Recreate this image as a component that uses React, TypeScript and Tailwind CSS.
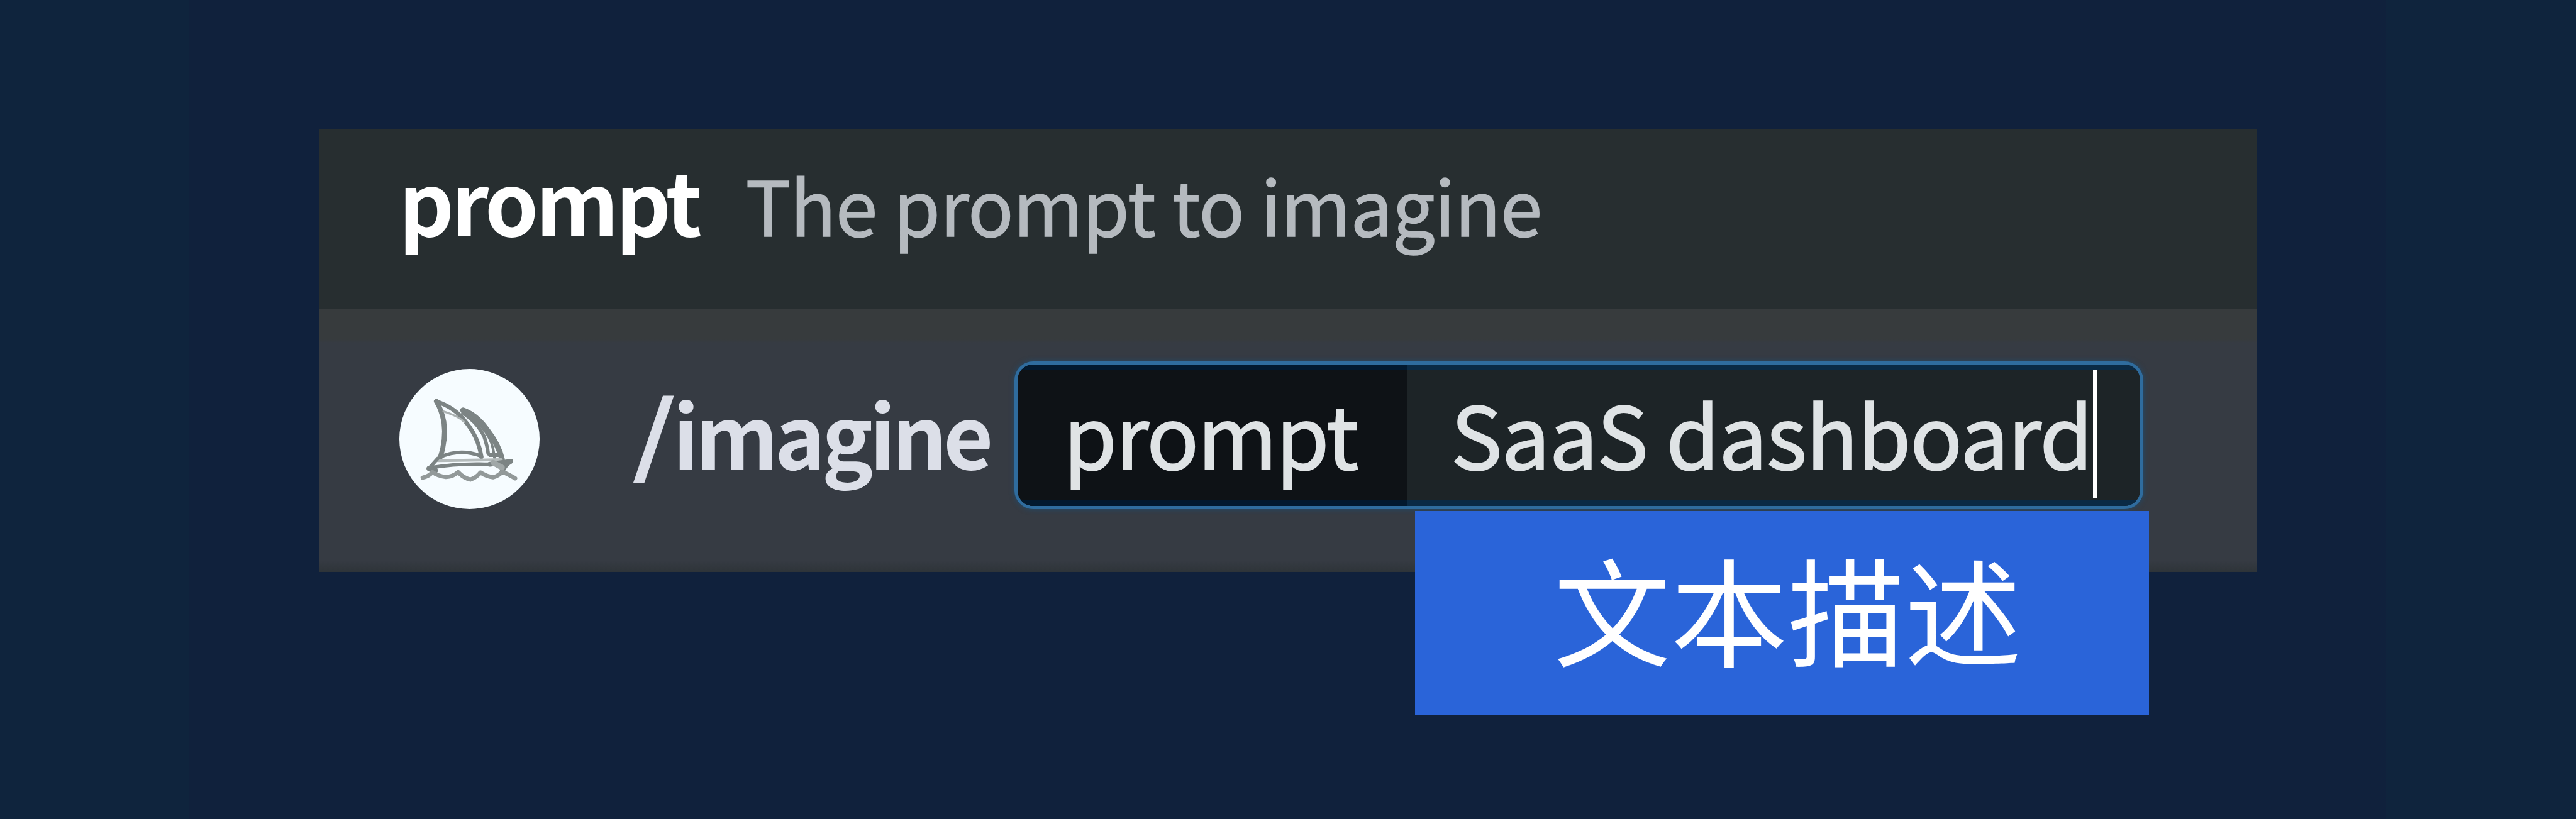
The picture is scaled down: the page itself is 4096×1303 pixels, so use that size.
function SailboatAvatar() {
  return (
    <div className="mt-[11px] size-[223px] shrink-0 overflow-hidden rounded-full bg-[#f6fcff]">
      <svg
        viewBox="115 105 860 860"
        className="size-full"
        fill="none"
        stroke="#7c8484"
        strokeWidth="22"
        strokeLinecap="round"
        strokeLinejoin="round"
      >
        {/* front sail */}
        <path d="M342 304 Q372 350 388 430 Q402 540 366 648" strokeWidth="30" />
        <path d="M342 304 Q450 340 512 418 Q600 520 618 645" strokeWidth="26" />
        <path d="M366 645 Q490 590 618 640" />
        <path d="M385 365 Q480 395 512 430" stroke="#aab1b1" strokeWidth="12" />
        {/* back sail */}
        <path d="M505 358 Q585 385 650 475 Q725 570 745 660" strokeWidth="34" />
        <path d="M505 375 Q600 440 635 520 Q655 580 660 625" strokeWidth="22" />
        <path d="M570 410 Q650 480 680 560 Q695 610 698 650" strokeWidth="16" />
        <path d="M672 632 L738 632" strokeWidth="26" />
        {/* hull */}
        <path d="M350 668 L740 662" stroke="#b4bbbb" strokeWidth="18" />
        <path d="M350 655 L300 712 Q480 682 670 690" />
        <path d="M670 690 L798 672 Q762 690 742 742" strokeWidth="30" />
        <path d="M690 680 L745 710" stroke="#a0a7a7" strokeWidth="34" />
        <path d="M298 716 L335 728" strokeWidth="34" />
        {/* waves */}
        <path
          d="M258 772 Q295 765 318 738 Q350 762 400 768 Q445 765 475 738 Q510 775 550 784 Q590 770 612 740 Q650 765 690 770 Q725 762 745 735 Q780 750 825 776"
          stroke="#929999"
          strokeWidth="26"
        />
      </svg>
    </div>
  );
}

function PromptField() {
  return (
    <div className="flex h-[235px] w-[1795px] overflow-hidden rounded-[30px] border-[5px] border-[#2f6c9e] bg-[#1d2427] text-[137px] leading-none text-[#dfe3e5] shadow-[0_0_8px_#1f4c70] [-webkit-text-stroke:2px_#dfe3e5]">
      <div className="flex w-[620px] items-center border-y-[9px] border-[#02192f] bg-[#0e1216] pl-[73px]">
        <span className="mb-[10px] tracking-[-2.2px]">prompt</span>
      </div>
      <div className="flex flex-1 items-center border-y-[9px] border-[#0a2a45] pl-[69px]">
        <span className="mb-[10px] w-[1021px] whitespace-nowrap tracking-[-1.2px]">
          SaaS dashboard
        </span>
        <span className="mb-[4px] h-[205px] w-[6px] bg-white"></span>
      </div>
    </div>
  );
}

function App() {
  return (
    <div className="h-[1303px] w-[4096px] overflow-hidden bg-[linear-gradient(to_right,#0f243d_301px,#10213c_301px,#10213c_3794px,#0f243d_3794px)] pt-[205px] pl-[508px] font-['Noto_Sans_CJK_SC',sans-serif]">
      <div className="relative h-[705px] w-[3080px] bg-[linear-gradient(#373b3d_335px,#363b43_340px,#363b43_686px,#2e3439)]">
        <header className="flex h-[287px] items-baseline bg-[#272e30] pt-[43px] pl-[126px]">
          <span className="text-[137px] leading-none font-bold tracking-[-4.8px] text-white">
            prompt
          </span>
          <span className="ml-[74px] text-[120px] leading-none tracking-[-0.7px] text-[#b5babf] [-webkit-text-stroke:1.5px_#b5babf]">
            The prompt to imagine
          </span>
        </header>
        <div className="flex items-center pt-[83px] pl-[127px]">
          <SailboatAvatar />
          <div className="mb-[10px] ml-[157px] w-[598px] text-[137px] leading-none font-bold whitespace-nowrap text-[#dcdfe8]">
            <span className="inline-block -translate-y-[5px] -skew-x-5 [-webkit-text-stroke:4px_#dcdfe8]">
              /
            </span>
            <span className="ml-[2px] tracking-[-6px]">imagine</span>
          </div>
          <PromptField />
        </div>
        <div className="absolute top-[608px] left-[1742px] flex h-[324px] w-[1167px] items-center justify-center bg-[#2a64d9] pb-[18px] pl-[18px]">
          <span className="text-[186px] leading-none text-white">文本描述</span>
        </div>
      </div>
    </div>
  );
}

export default App;
